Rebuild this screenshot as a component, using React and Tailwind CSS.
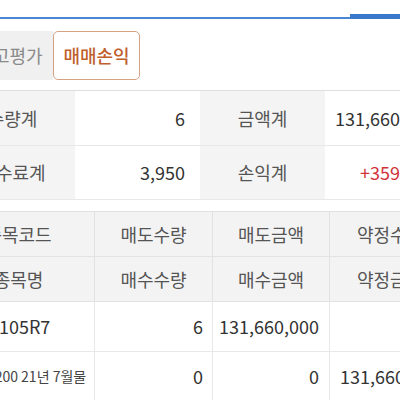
export default function App() {
  const summary = [
    ["수량계", "6", "금액계", "131,660,000", false],
    ["수수료계", "3,950", "손익계", "+359,000", true],
  ];

  return (
    <div className="w-[400px] h-[400px] overflow-hidden bg-white font-['Noto_Sans_CJK_KR',sans-serif] text-[18px] text-[#333]">
      <div className="flex items-end h-[19px]">
        <div className="flex-1 h-[2px] bg-[#4a86d4]" />
        <div className="w-[50px] h-[5px] bg-[#3a78cc]" />
      </div>

      <div className="flex mt-[12px] h-[49px] -ml-[34px]">
        <div className="w-[87px] flex items-center justify-center bg-[#f0f0f0] rounded-l-[5px] text-[#8a8a8a]">
          잔고평가
        </div>
        <div className="w-[87px] flex items-center justify-center border border-[#d4a283] rounded-[5px] text-[#c0602c] font-medium">
          매매손익
        </div>
      </div>

      <div className="mt-[10px] border-t border-[#dedede] -ml-[50px] w-[500px]">
        {summary.map(([l1, v1, l2, v2, red], i) => (
          <div
            key={i}
            className={
              "grid grid-cols-[125px_125px_125px_125px] border-b border-[#e8e8e8] " +
              (i === 0 ? "h-[55px]" : "h-[54px]")
            }
          >
            <div className="bg-[#f4f4f4] flex items-center justify-center text-[#555]">{l1}</div>
            <div className="flex items-center justify-end pr-[15px]">{v1}</div>
            <div className="bg-[#f4f4f4] flex items-center justify-center text-[#555]">{l2}</div>
            <div
              className={
                "flex items-center justify-end pr-[15px] " + (red ? "text-[#d0343a]" : "")
              }
            >
              {v2}
            </div>
          </div>
        ))}
      </div>

      <div className="mt-[11px] -ml-[57px] w-[520px] border-t border-[#e0e0e0]">
        <div className="grid grid-cols-[152px_118px_117px_120px] h-[45px] bg-[#f3f3f3] border-b border-[#e2e2e2] text-[#555]">
          <div className="flex items-center justify-center border-r border-[#e2e2e2]">종목코드</div>
          <div className="flex items-center justify-center border-r border-[#e2e2e2]">매도수량</div>
          <div className="flex items-center justify-center border-r border-[#e2e2e2]">매도금액</div>
          <div className="flex items-center justify-center">약정수량</div>
        </div>
        <div className="grid grid-cols-[152px_118px_117px_120px] h-[45px] bg-[#f3f3f3] border-b border-[#e2e2e2] text-[#555]">
          <div className="flex items-center justify-center border-r border-[#e2e2e2]">종목명</div>
          <div className="flex items-center justify-center border-r border-[#e2e2e2]">매수수량</div>
          <div className="flex items-center justify-center border-r border-[#e2e2e2]">매수금액</div>
          <div className="flex items-center justify-center">약정금액</div>
        </div>
        <div className="grid grid-cols-[152px_118px_117px_120px] h-[50px] border-b border-[#e8e8e8]">
          <div className="flex items-center pl-[45px] border-r border-[#e8e8e8] overflow-hidden whitespace-nowrap">A105R7</div>
          <div className="flex items-center justify-end pr-[9px] border-r border-[#e8e8e8]">6</div>
          <div className="flex items-center justify-end pr-[10px] border-r border-[#e8e8e8]">131,660,000</div>
          <div />
        </div>
        <div className="grid grid-cols-[152px_118px_117px_120px] h-[50px] border-b border-[#e8e8e8]">
          <div className="flex items-center pl-[13px] border-r border-[#e8e8e8] overflow-hidden whitespace-nowrap text-[14px] text-[#444]">코스피200 21년 7월물</div>
          <div className="flex items-center justify-end pr-[9px] border-r border-[#e8e8e8]">0</div>
          <div className="flex items-center justify-end pr-[10px] border-r border-[#e8e8e8]">0</div>
          <div className="flex items-center justify-end pr-[10px]">131,660,000</div>
        </div>
      </div>
    </div>
  );
}
